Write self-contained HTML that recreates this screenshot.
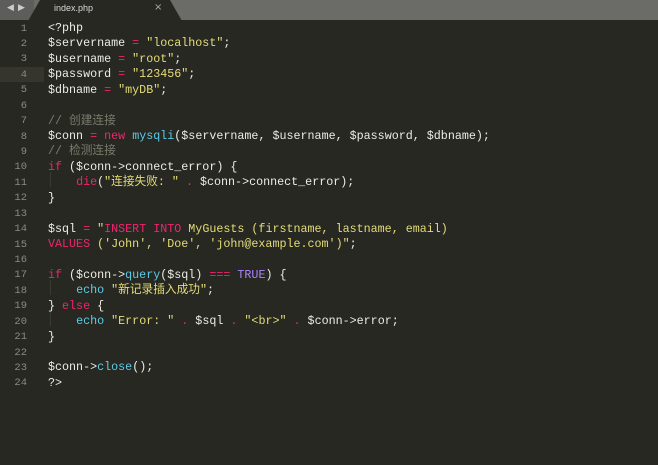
<!DOCTYPE html>
<html><head><meta charset="utf-8"><style>
html,body{margin:0;padding:0;}
body{width:658px;height:465px;background:#272822;overflow:hidden;position:relative;font-family:"Liberation Mono","Noto Sans CJK SC",monospace;}
.bar{position:absolute;left:0;top:0;width:658px;height:20px;background:#6b6b67;}
.bar .l{position:absolute;left:0;top:0;width:34px;height:20px;background:#5d5d5a;}
.arr{position:absolute;top:3px;color:#ccc;font-size:9px;font-family:"DejaVu Sans",sans-serif;}
.tab{position:absolute;left:0;top:0;}
.tabt{position:absolute;left:54px;top:3px;color:#d8d8d8;font-size:9px;font-family:"Liberation Sans",sans-serif;}
.x{position:absolute;left:154px;top:2px;color:#aaa;font-size:10px;font-family:"DejaVu Sans",sans-serif;}
.hl{position:absolute;left:0;top:67px;width:44px;height:15px;background:#35352e;}
.ln{position:absolute;left:0;width:27px;text-align:right;color:#8a8a82;font-size:10.5px;line-height:15px;height:15px;}
.c{position:absolute;left:48px;font-size:11.7px;line-height:15px;height:15px;color:#ecece4;white-space:pre;}
.c span{line-height:15px;}
.k{color:#f0246e}.s{color:#e4dc78}.f{color:#5ccbe6}.m{color:#7b7b6e}.p{color:#ae81ff}
.g{position:absolute;width:1px;background:#3a3a34;}
</style></head><body>
<div class="bar"><div class="l"></div></div>
<span class="arr" style="left:7px">◀</span><span class="arr" style="left:18px">▶</span>
<svg class="tab" width="200" height="21"><path d="M28 21 L40 0 L170 0 L182 21 Z" fill="#272822"/></svg>
<span class="tabt">index.php</span><span class="x">×</span>
<div class="hl"></div>
<div class="g" style="left:50px;top:172px;height:15px"></div>
<div class="g" style="left:50px;top:280px;height:15px"></div>
<div class="g" style="left:50px;top:311px;height:15px"></div>
<div id="code"></div>
<script>
var L=[
'&lt;?php',
'$servername <span class="k">=</span> <span class="s">"localhost"</span>;',
'$username <span class="k">=</span> <span class="s">"root"</span>;',
'$password <span class="k">=</span> <span class="s">"123456"</span>;',
'$dbname <span class="k">=</span> <span class="s">"myDB"</span>;',
'',
'<span class="m">// 创建连接</span>',
'$conn <span class="k">=</span> <span class="k">new</span> <span class="f">mysqli</span>($servername, $username, $password, $dbname);',
'<span class="m">// 检测连接</span>',
'<span class="k">if</span> ($conn-&gt;connect_error) {',
'    <span class="k">die</span>(<span class="s">"连接失败: "</span> <span class="k">.</span> $conn-&gt;connect_error);',
'}',
'',
'$sql <span class="k">=</span> <span class="s">"</span><span class="k">INSERT INTO</span><span class="s"> MyGuests (firstname, lastname, email)</span>',
'<span class="k">VALUES</span><span class="s"> (\'John\', \'Doe\', \'john@example.com\')"</span>;',
'',
'<span class="k">if</span> ($conn-&gt;<span class="f">query</span>($sql) <span class="k">===</span> <span class="p">TRUE</span>) {',
'    <span class="f">echo</span> <span class="s">"新记录插入成功"</span>;',
'} <span class="k">else</span> {',
'    <span class="f">echo</span> <span class="s">"Error: "</span> <span class="k">.</span> $sql <span class="k">.</span> <span class="s">"&lt;br&gt;"</span> <span class="k">.</span> $conn-&gt;error;',
'}',
'',
'$conn-&gt;<span class="f">close</span>();',
'?&gt;'];
var h='';
for(var i=0;i<L.length;i++){var y=21+i*15.43;
h+='<div class="ln" style="top:'+(y+0.5)+'px">'+(i+1)+'</div><div class="c" style="top:'+y+'px">'+L[i]+'</div>';}
document.getElementById('code').innerHTML=h;
</script>
</body></html>
